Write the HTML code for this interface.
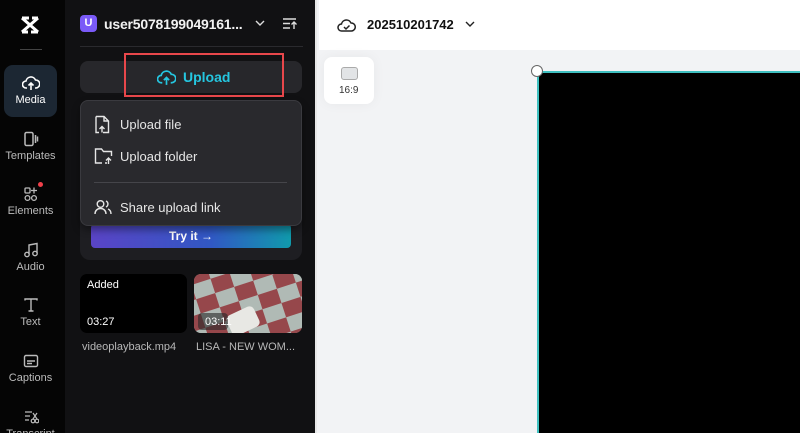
<!DOCTYPE html>
<html><head><style>
*{margin:0;padding:0;box-sizing:border-box}
html,body{width:800px;height:433px;overflow:hidden}
body{font-family:"Liberation Sans",sans-serif;background:#f2f3f5;position:relative}
.a{position:absolute}
.side{left:0;top:0;width:65px;height:433px;background:#050505}
.panel{left:65px;top:0;width:252px;height:433px;background:#111113;border-right:2px solid #e8e8e8}
.nav{position:absolute;left:4px;width:53px;text-align:center;color:#bbb;font-size:11px}
.nav svg{display:block;margin:0 auto 3px}
.w{color:#e6e6e6}
</style></head><body>
<div class="a side">
 <svg class="a" style="left:19px;top:15px" width="22" height="20" viewBox="0 0 22 20"><path d="M3 3 L19 17 M19 3 L3 17 M3 3 H10 M12 17 H19 M3 17 H9 M13 3 H19" stroke="#fff" stroke-width="3" fill="none"/></svg>
 <div class="a" style="left:20px;top:49px;width:22px;height:1px;background:#444"></div>
 <div class="nav" style="top:65px;height:52px;background:#1c2733;border-radius:9px;padding-top:10px;color:#fff">
  <svg width="18" height="16" viewBox="0 0 18 16"><path d="M5 13H4a3.5 3.5 0 0 1 0-7 5 5 0 0 1 9.5-1A4 4 0 0 1 14 13h-1M9 15V8M6.5 10.5 9 8l2.5 2.5" stroke="#fff" stroke-width="1.6" fill="none"/></svg>Media</div>
 <div class="nav" style="top:131px"><svg width="16" height="16" viewBox="0 0 16 16"><rect x="2" y="1.5" width="8" height="13" rx="1.5" stroke="#bbb" stroke-width="1.5" fill="none"/><path d="M12.5 4v8M14.5 5.5v5" stroke="#bbb" stroke-width="1.5"/></svg>Templates</div>
 <div class="nav" style="top:186px"><svg width="16" height="16" viewBox="0 0 16 16"><rect x="2" y="2" width="5" height="5" rx="1" stroke="#bbb" stroke-width="1.3" fill="none"/><path d="M11 1.5v6M8 4.5h6" stroke="#bbb" stroke-width="1.3"/><circle cx="4.5" cy="12" r="2.4" stroke="#bbb" stroke-width="1.3" fill="none"/><circle cx="11" cy="12" r="2.4" stroke="#bbb" stroke-width="1.3" fill="none"/></svg>Elements</div>
 <div class="a" style="left:38px;top:182px;width:5px;height:5px;border-radius:50%;background:#f0404a"></div>
 <div class="nav" style="top:242px"><svg width="16" height="16" viewBox="0 0 16 16"><path d="M6 12V3l8-1.5V11" stroke="#bbb" stroke-width="1.4" fill="none"/><circle cx="4" cy="12.5" r="2.2" stroke="#bbb" stroke-width="1.4" fill="none"/><circle cx="12" cy="11.5" r="2.2" stroke="#bbb" stroke-width="1.4" fill="none"/></svg>Audio</div>
 <div class="nav" style="top:297px"><svg width="16" height="16" viewBox="0 0 16 16"><path d="M2 3.5V2h12v1.5M8 2v12M5.5 14h5" stroke="#bbb" stroke-width="1.4" fill="none"/></svg>Text</div>
 <div class="nav" style="top:353px"><svg width="16" height="16" viewBox="0 0 16 16"><rect x="1.5" y="2.5" width="13" height="11" rx="1.5" stroke="#bbb" stroke-width="1.4" fill="none"/><path d="M4 8h8M4 10.5h5" stroke="#bbb" stroke-width="1.4"/></svg>Captions</div>
 <div class="nav" style="top:409px"><svg width="16" height="16" viewBox="0 0 16 16"><path d="M2 3h7M2 7h5M2 11h4" stroke="#bbb" stroke-width="1.3"/><circle cx="10" cy="12" r="1.8" stroke="#bbb" stroke-width="1.2" fill="none"/><circle cx="14" cy="12" r="1.8" stroke="#bbb" stroke-width="1.2" fill="none"/><path d="M10 4l4 6M14 4l-4 6" stroke="#bbb" stroke-width="1.2"/></svg>Transcript</div>
</div>
<div class="a panel">
 <div class="a" style="left:15px;top:15px;width:17px;height:17px;border-radius:4px;background:#7a5af8;color:#fff;font-size:11px;font-weight:bold;text-align:center;line-height:17px">U</div>
 <div class="a w" style="left:39px;top:16px;font-size:14px;font-weight:bold;color:#f2f2f2;letter-spacing:-0.2px">user5078199049161...</div>
 <svg class="a" style="left:190px;top:20px" width="10" height="7"><path d="M1 1l4 4 4-4" stroke="#ddd" stroke-width="1.4" fill="none"/></svg>
 <svg class="a" style="left:217px;top:17px" width="15" height="13"><path d="M1 2h13M1 6.5h7M1 11h7M12 12V5M9.5 7.5 12 5l2.5 2.5" stroke="#ddd" stroke-width="1.4" fill="none"/></svg>
 <div class="a" style="left:15px;top:46px;width:223px;height:1px;background:#2a2a2e"></div>
 <div class="a" style="left:15px;top:61px;width:222px;height:32px;border-radius:8px;background:#27272b"></div>
 <svg class="a" style="left:92px;top:69px" width="19" height="17" viewBox="0 0 18 16"><path d="M5 13H4a3.5 3.5 0 0 1 0-7 5 5 0 0 1 9.5-1A4 4 0 0 1 14 13h-1M9 15V8M6.5 10.5 9 8l2.5 2.5" stroke="#25c6e0" stroke-width="1.6" fill="none"/></svg>
 <div class="a" style="left:118px;top:69px;font-size:14px;font-weight:bold;color:#25c6e0">Upload</div>
 <div class="a" style="left:59px;top:53px;width:160px;height:44px;border:2px solid #e8474b"></div>
 <div class="a" style="left:15px;top:210px;width:222px;height:50px;border-radius:10px;background:#1e1e22"></div>
 <div class="a" style="left:26px;top:224px;width:200px;height:24px;border-radius:4px;background:linear-gradient(90deg,#5a44c6,#3158c4 60%,#109aac);color:#fff;font-size:12px;font-weight:bold;text-align:center;line-height:24px">Try it →</div>
 <div class="a" style="left:15px;top:100px;width:222px;height:126px;border-radius:8px;background:#29292d;border:1px solid #3a3a3f;box-shadow:0 4px 8px rgba(0,0,0,.4)"></div>
 <svg class="a" style="left:29px;top:115px" width="17" height="19"><path d="M2 1.5h8l4.5 4.5v11.5H9M2 1.5v16h3M10 1.5V6h4.5M8 17.5v-6M5.5 14 8 11.5l2.5 2.5" stroke="#e6e6e6" stroke-width="1.4" fill="none"/></svg>
 <div class="a w" style="left:55px;top:117px;font-size:13px">Upload file</div>
 <svg class="a" style="left:29px;top:147px" width="20" height="18"><path d="M8 16H1.5V2h6l2 2.5h8V9M11 16h2" stroke="#e6e6e6" stroke-width="1.4" fill="none"/><path d="M14.5 17v-6M12 13.5l2.5-2.5 2.5 2.5" stroke="#e6e6e6" stroke-width="1.4" fill="none"/></svg>
 <div class="a w" style="left:55px;top:149px;font-size:13px">Upload folder</div>
 <div class="a" style="left:29px;top:182px;width:193px;height:1px;background:#45454a"></div>
 <svg class="a" style="left:29px;top:199px" width="18" height="16"><circle cx="6.5" cy="5" r="3.3" stroke="#e6e6e6" stroke-width="1.4" fill="none"/><path d="M1 15c0-3.5 2.5-5.5 5.5-5.5S12 11.5 12 15M12 2a3.3 3.3 0 0 1 0 6M14 10c2 .8 3 2.5 3 5" stroke="#e6e6e6" stroke-width="1.4" fill="none"/></svg>
 <div class="a w" style="left:55px;top:200px;font-size:13px">Share upload link</div>
 <div class="a" style="left:15px;top:274px;width:107px;height:59px;border-radius:7px;background:#000"></div>
 <div class="a" style="left:22px;top:279px;font-size:11px;color:#fff">Added</div>
 <div class="a" style="left:22px;top:316px;font-size:11px;color:#fff">03:27</div>
 <div class="a" style="left:129px;top:274px;width:108px;height:59px;border-radius:7px;overflow:hidden;background:#8e9a94">
  <div class="a" style="left:-30px;top:-40px;width:200px;height:160px;transform:rotate(-18deg);background:repeating-conic-gradient(#a84048 0 25%,#c9d0cc 0 50%) 0 0/40px 30px"></div>
  <div class="a" style="left:0;top:0;width:108px;height:59px;background:rgba(80,100,90,.2)"></div>
  <div class="a" style="left:34px;top:36px;width:30px;height:22px;border-radius:5px;background:#e8e8e4;transform:rotate(-25deg)"></div>
  <div class="a" style="left:4px;top:39px;width:30px;height:17px;border-radius:4px;background:rgba(40,40,40,.6)"></div>
 </div>
 <div class="a" style="left:140px;top:316px;font-size:11px;color:#fff">03:11</div>
 <div class="a" style="left:17px;top:341px;font-size:11px;color:#b8b8b8">videoplayback.mp4</div>
 <div class="a" style="left:131px;top:341px;font-size:11px;color:#b8b8b8">LISA - NEW WOM...</div>
</div>
<div class="a" style="left:319px;top:0;width:481px;height:50px;background:#fff"></div>
<svg class="a" style="left:337px;top:17px" width="19" height="16" viewBox="0 0 19 16"><path d="M5 14H4.5a3.5 3.5 0 0 1 0-7 5 5 0 0 1 9.5-1A4 4 0 0 1 14.5 14zM7 10l2 2 3.5-3.5" stroke="#222" stroke-width="1.5" fill="none"/></svg>
<div class="a" style="left:367px;top:17px;font-size:13px;font-weight:bold;color:#111">202510201742</div>
<svg class="a" style="left:465px;top:21px" width="10" height="7"><path d="M1 1l4 4 4-4" stroke="#222" stroke-width="1.4" fill="none"/></svg>
<div class="a" style="left:324px;top:57px;width:50px;height:47px;border-radius:8px;background:#fff;box-shadow:0 0 12px rgba(0,0,0,.05)"></div>
<div class="a" style="left:341px;top:67px;width:17px;height:13px;border-radius:3px;border:1px solid #aaa;background:#e2e4e6"></div>
<div class="a" style="left:339px;top:85px;font-size:10px;color:#333">16:9</div>
<div class="a" style="left:537px;top:71px;width:263px;height:362px;background:#000;border-left:2px solid #3fc0c0;border-top:2px solid #3fc0c0"></div>
<div class="a" style="left:531px;top:65px;width:12px;height:12px;border-radius:50%;background:#fff;border:1px solid #666"></div>
</body></html>
